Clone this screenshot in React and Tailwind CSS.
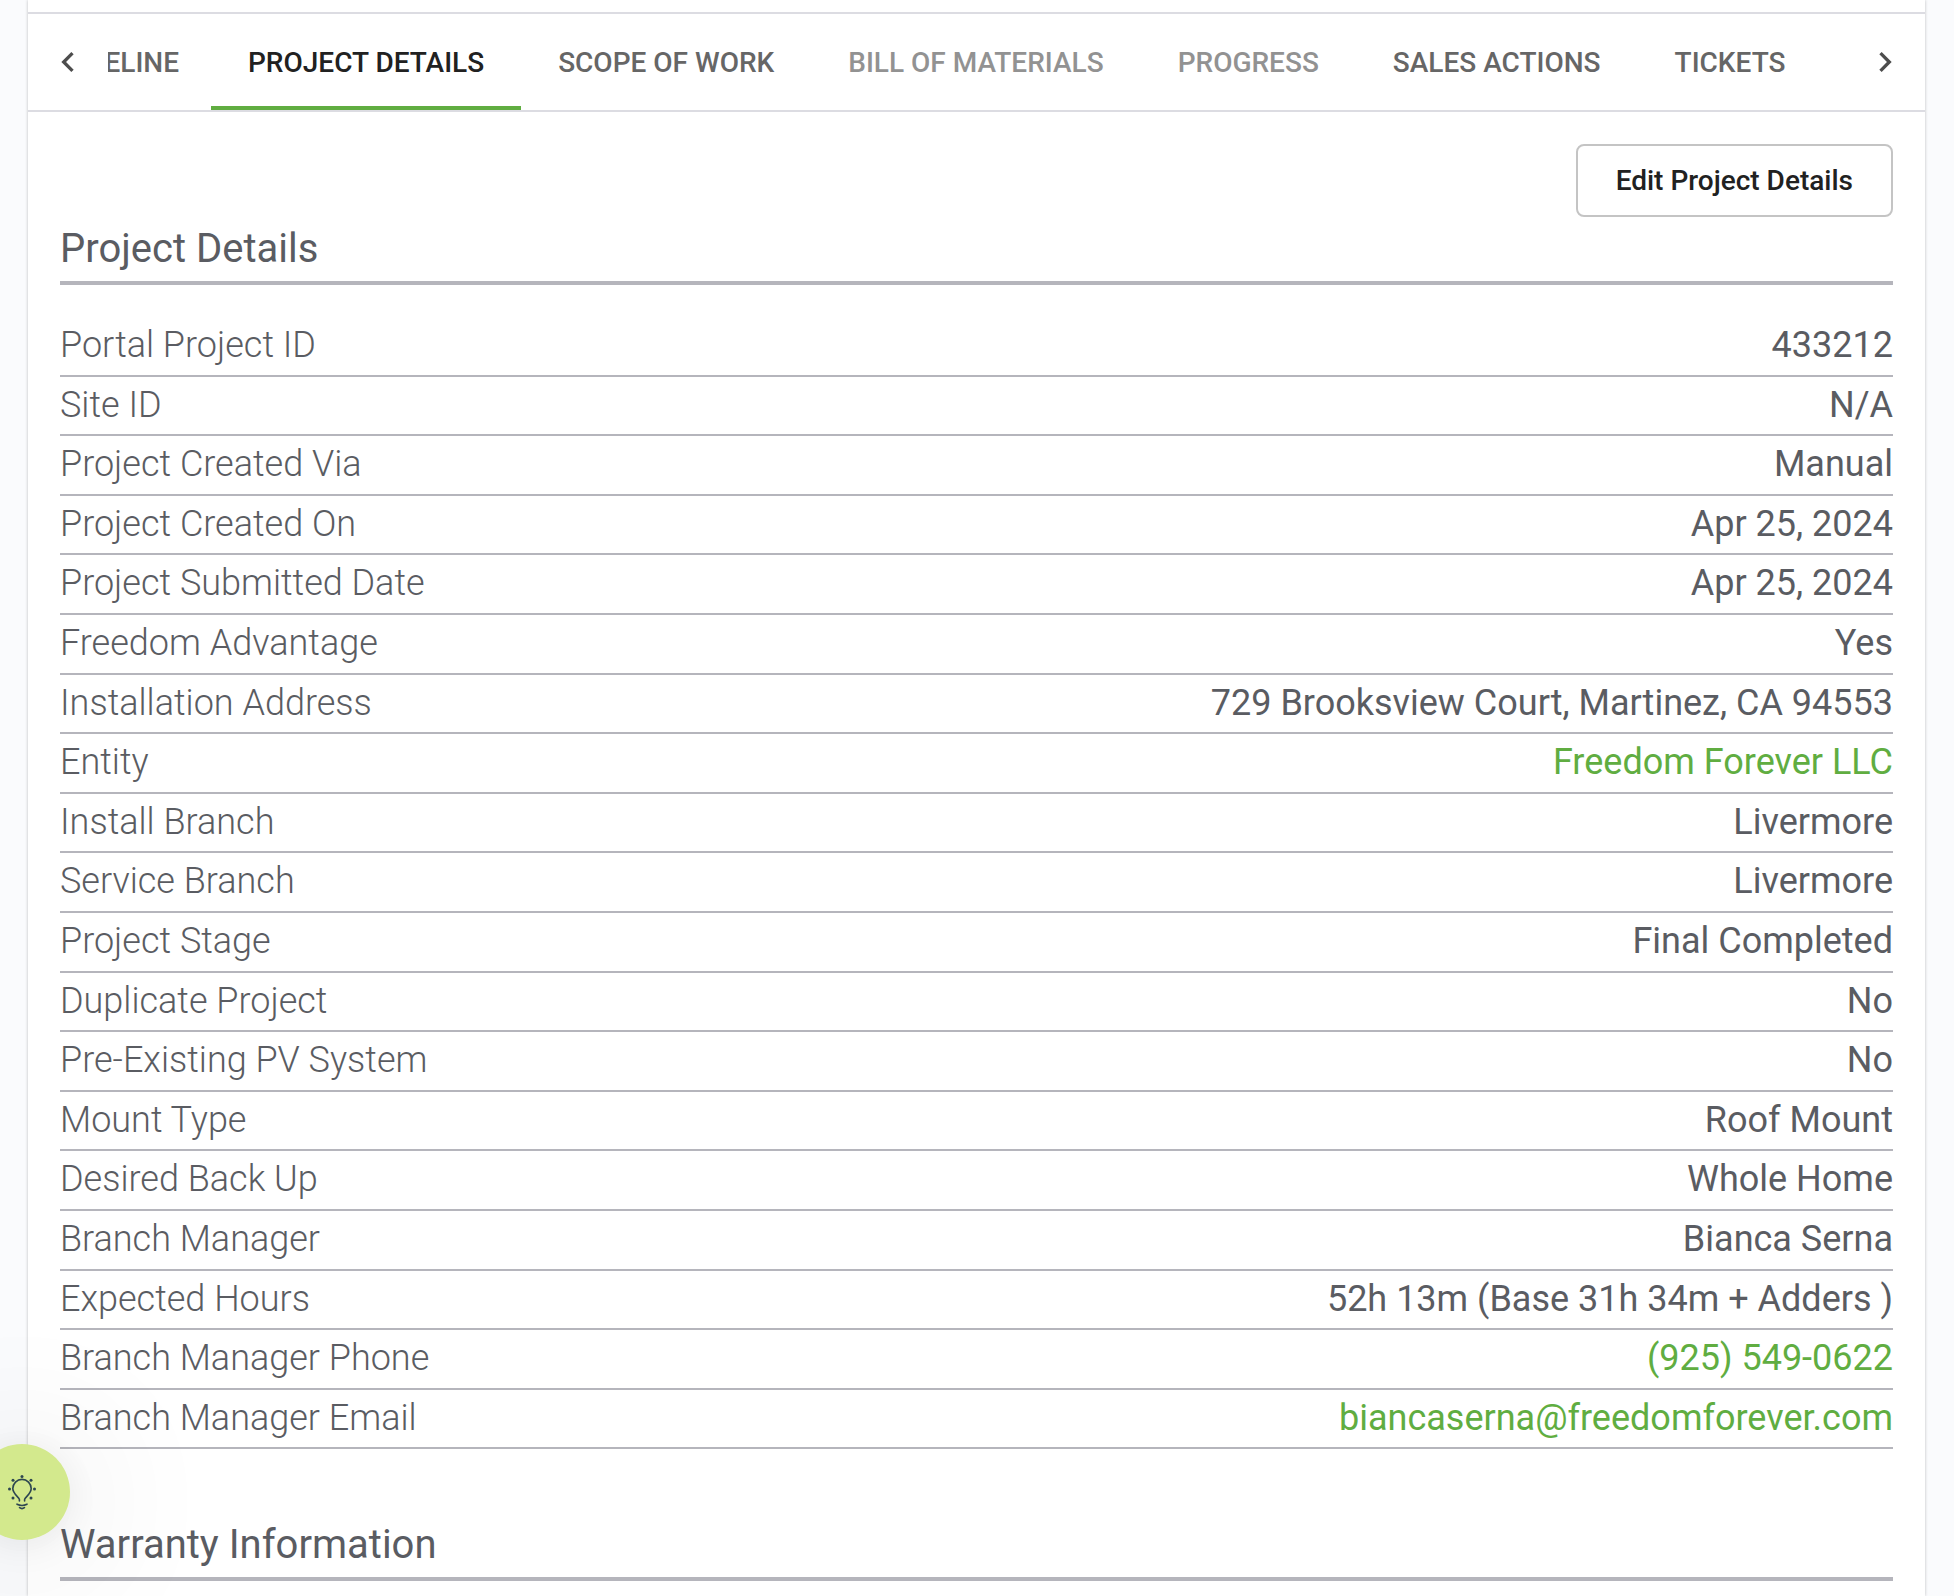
import React from "react";

const tabs = [
  { name: "PROJECT DETAILS", tone: "text-[#212121]", active: true },
  { name: "SCOPE OF WORK", tone: "text-[#666666]" },
  { name: "BILL OF MATERIALS", tone: "text-[#929292]", disabled: true },
  { name: "PROGRESS", tone: "text-[#929292]", disabled: true },
  { name: "SALES ACTIONS", tone: "text-[#666666]" },
  { name: "TICKETS", tone: "text-[#666666]" },
];

const details = [
  ["Portal Project ID", "433212"],
  ["Site ID", "N/A"],
  ["Project Created Via", "Manual"],
  ["Project Created On", "Apr 25, 2024"],
  ["Project Submitted Date", "Apr 25, 2024"],
  ["Freedom Advantage", "Yes"],
  ["Installation Address", "729 Brooksview Court, Martinez, CA 94553"],
  ["Entity", "Freedom Forever LLC", "#entity"],
  ["Install Branch", "Livermore"],
  ["Service Branch", "Livermore"],
  ["Project Stage", "Final Completed"],
  ["Duplicate Project", "No"],
  ["Pre-Existing PV System", "No"],
  ["Mount Type", "Roof Mount"],
  ["Desired Back Up", "Whole Home"],
  ["Branch Manager", "Bianca Serna"],
  ["Expected Hours", "52h 13m (Base 31h 34m + Adders )"],
  ["Branch Manager Phone", "(925) 549-0622", "tel:+19255490622"],
  ["Branch Manager Email", "biancaserna@freedomforever.com", "mailto:biancaserna@freedomforever.com"],
];

function Chevron({ d }) {
  return (
    <svg viewBox="0 0 24 24" className="size-10" fill="#4d4d4d" aria-hidden="true">
      <path d={d} />
    </svg>
  );
}

function TabBar() {
  return (
    <nav className="flex h-[100px] items-stretch border-y-2 border-[#dcdce2] text-[28px] font-medium">
      <button type="button" aria-label="Previous tabs" className="flex w-20 shrink-0 items-center justify-center">
        <Chevron d="M15.41 7.41L14 6l-6 6 6 6 1.41-1.41L10.83 12z" />
      </button>
      <div role="tablist" className="flex min-w-0 flex-1 overflow-hidden">
        <div className="flex w-[103px] shrink-0 justify-end overflow-hidden">
          <button type="button" role="tab" aria-selected="false" className="shrink-0 px-8 pt-0.5 text-[#666666]">
            TIMELINE
          </button>
        </div>
        {tabs.map((t) => (
          <button
            key={t.name}
            type="button"
            role="tab"
            aria-selected={!!t.active}
            disabled={t.disabled}
            className={`shrink-0 border-b-4 px-[37px] pt-1.5 whitespace-nowrap ${t.active ? "border-[#60ad41]" : "border-transparent"} ${t.tone}`}
          >
            {t.name}
          </button>
        ))}
      </div>
      <button type="button" aria-label="Next tabs" className="flex w-20 shrink-0 items-center justify-center">
        <Chevron d="M10 6L8.59 7.41 13.17 12l-4.58 4.59L10 18l6-6z" />
      </button>
    </nav>
  );
}

function SectionTitle({ children }) {
  return (
    <h2 className="border-b-4 border-[#b5b5bc] text-[40px] leading-[64px] text-[#5a5c62]">{children}</h2>
  );
}

function LightBulb() {
  return (
    <svg viewBox="0 -1 28 36" className="h-9 w-7" fill="none" stroke="#2d4650" strokeWidth="1.6" strokeLinecap="round" aria-hidden="true">
      <path d="M11.4 26v-1.4c0-2.4-6.6-5.4-6.6-11a9.200 9.200 0 0 1 18.400 0c0 5.600-6.600 8.600-6.600 11V26" />
      <path d="M9 29.200c3 1.500 7 1.500 10 0M11.600 32.600c1.500 1.200 3.300 1.200 4.800 0" />
      <g fill="#2d4650" stroke="none">
        <circle cx="14" cy="1.600" r="1.500" />
        <circle cx="5" cy="5.200" r="1.500" />
        <circle cx="23" cy="5.200" r="1.500" />
        <circle cx="1.500" cy="14" r="1.500" />
        <circle cx="26.500" cy="14" r="1.500" />
        <circle cx="5" cy="23" r="1.500" />
        <circle cx="23" cy="23" r="1.500" />
      </g>
    </svg>
  );
}

export default function App() {
  return (
    <div className="min-h-screen bg-[#fafbfd] pr-[29px] pl-7 font-[Roboto,sans-serif]">
      <main className="min-h-screen bg-white pt-3 shadow-[0_0_3px_rgba(0,0,0,0.25)]">
        <TabBar />
        <div className="px-8 pt-8">
          <div className="flex justify-end">
            <button
              type="button"
              className="rounded-lg border-2 border-[#c4c4c4] px-[38px] text-[28px] leading-[69px] font-medium text-[#212121]"
            >
              Edit Project Details
            </button>
          </div>
          <SectionTitle>Project Details</SectionTitle>
          <dl className="mt-8 mb-16 text-[36px] leading-[1.6] text-[#5a5c62]">
            {details.map(([label, value, href]) => (
              <div key={label} className="flex justify-between border-b-2 border-[#b5b5bc]">
                <dt className="font-light">{label}</dt>
                <dd>
                  {href ? (
                    <a href={href} className="text-[#60ad41]">
                      {value}
                    </a>
                  ) : (
                    value
                  )}
                </dd>
              </div>
            ))}
          </dl>
          <SectionTitle>Warranty Information</SectionTitle>
        </div>
      </main>
      <button
        type="button"
        aria-label="Tips"
        className="fixed bottom-14 -left-[26px] flex size-24 items-center justify-center rounded-full bg-[#d3e98d] shadow-[0_10px_160px_rgba(0,0,0,0.16),0_4px_40px_rgba(0,0,0,0.08)]"
      >
        <LightBulb />
      </button>
    </div>
  );
}
